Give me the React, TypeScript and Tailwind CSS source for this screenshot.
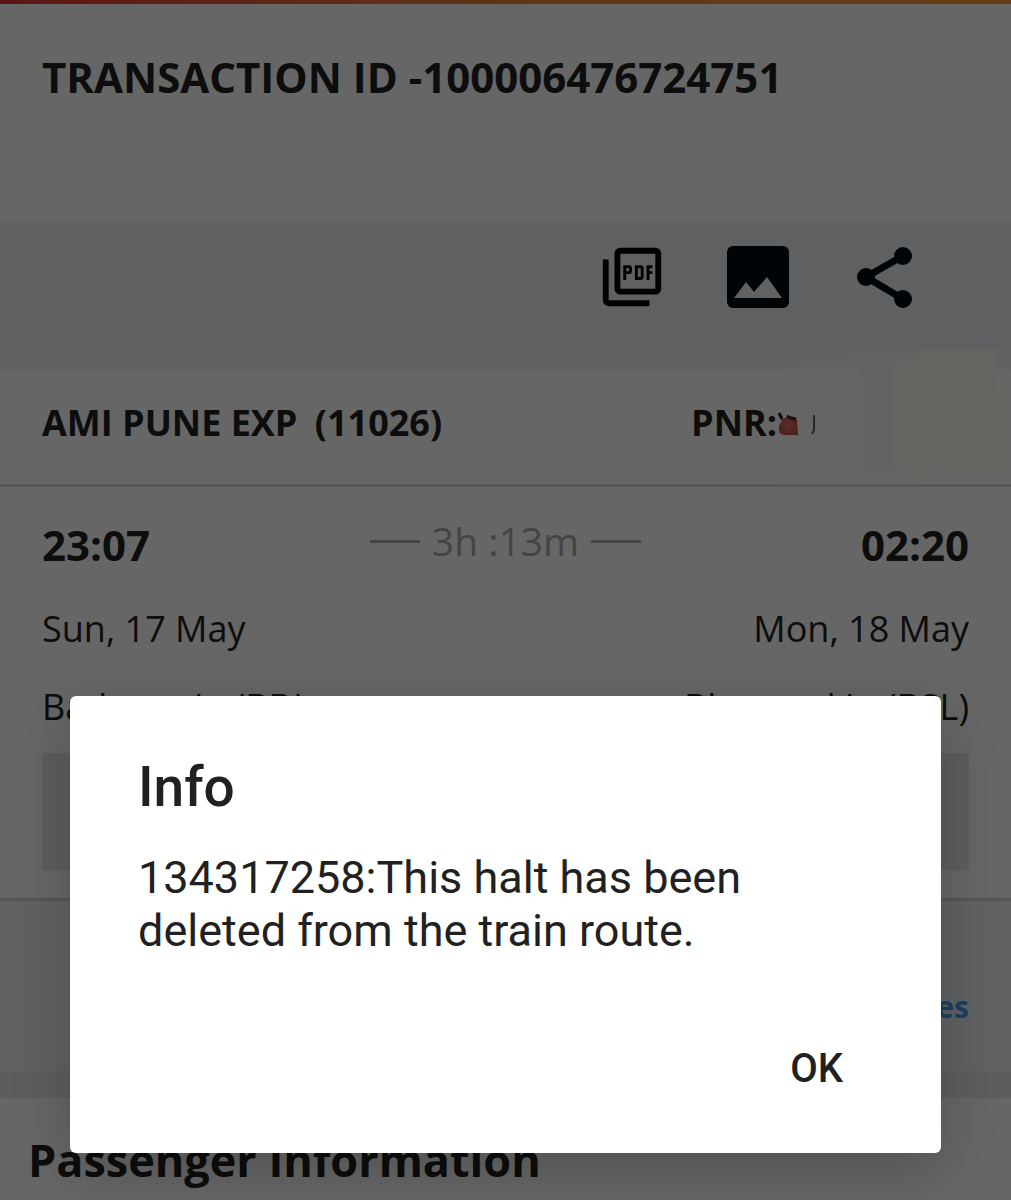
import { useState } from 'react';
import { MdOutlinePictureAsPdf } from 'react-icons/md';

interface Stop {
  time: string;
  date: string;
  station: string;
}

const departure: Stop = { time: '23:07', date: 'Sun, 17 May', station: 'Badnera Jn (BD)' };
const arrival: Stop = { time: '02:20', date: 'Mon, 18 May', station: 'Bhusaval Jn (BSL)' };

function ImageIcon() {
  return (
    <svg width="62" height="62" viewBox="0 0 62 62" aria-hidden="true">
      <rect width="62" height="62" rx="6" fill="#000a10" />
      <path d="M7 52 19 36l8 10 13-15 15 21z" fill="#f4f4f4" />
    </svg>
  );
}

function ShareIcon() {
  return (
    <svg width="58" height="62" viewBox="0 0 58 62" aria-hidden="true">
      <path d="M48 10 11 31l37 22" fill="none" stroke="#000a10" strokeWidth="7" />
      <circle cx="48" cy="10" r="9" fill="#000a10" />
      <circle cx="11" cy="31" r="9" fill="#000a10" />
      <circle cx="48" cy="53" r="9" fill="#000a10" />
    </svg>
  );
}

// Smudge painted over the booking number
function RedactedPnr() {
  return (
    <svg className="absolute -top-5 right-0" width="236" height="140" viewBox="0 0 236 140" aria-hidden="true">
      <defs>
        <linearGradient id="smudge" x1="0" y1="0" x2="1" y2="0">
          <stop offset="0" stopColor="#fffaf5" stopOpacity="0.3" />
          <stop offset="0.4" stopColor="#fbf8f5" />
          <stop offset="1" stopColor="#fbfbef" />
        </linearGradient>
        <radialGradient id="berry" cx="0.5" cy="0.6" r="0.6">
          <stop offset="0" stopColor="#e07468" />
          <stop offset="1" stopColor="#b84a42" />
        </radialGradient>
        <filter id="soft" x="-10%" y="-10%" width="120%" height="120%">
          <feGaussianBlur stdDeviation="4" />
        </filter>
        <filter id="edge" x="-20%" y="-20%" width="140%" height="140%">
          <feGaussianBlur stdDeviation="0.7" />
        </filter>
      </defs>
      <path d="M10 8 224 -4l4 122-100 10-120 4z" fill="url(#smudge)" filter="url(#soft)" />
      <g filter="url(#edge)">
        <path d="M4 64l4 6 6-3 8 4 1 15H9q-6-1-5-8 1-4 3-6z" fill="url(#berry)" />
        <path d="M4 64l3 6m5-3 4 2 5 1" fill="none" stroke="#4a1a18" strokeWidth="3" />
        <path d="M39 66v15l-2 4" fill="none" stroke="#666" strokeWidth="2" />
      </g>
    </svg>
  );
}

export default function App() {
  const [open, setOpen] = useState(true);

  return (
    <div className="relative min-h-screen overflow-hidden bg-white font-['Open_Sans',sans-serif] text-[#222]">
      <div className="h-1 bg-linear-to-r from-[#e8303a] via-[#f09030] via-60% to-[#f59a35]" />

      <header className="h-[217px] px-[42px] pt-11">
        <h1 className="text-[42px] leading-[58px] font-bold">TRANSACTION ID -100006476724751</h1>
      </header>

      <div className="flex h-[148px] items-start justify-end gap-[66px] bg-[#edf0f5] pt-[25px] pr-[98px]">
        <button
          type="button"
          aria-label="Download PDF"
          className="flex h-[62px] w-[58px] items-center justify-center text-black"
        >
          <MdOutlinePictureAsPdf size={70} className="shrink-0" />
        </button>
        <button type="button" aria-label="Save as image">
          <ImageIcon />
        </button>
        <button type="button" aria-label="Share">
          <ShareIcon />
        </button>
      </div>

      <section>
        <div className="relative flex h-[118px] justify-between border-b-3 border-[#d8d8d8] px-[42px] pt-[30px] text-[36px] leading-[48px] font-bold">
          <h2>
            AMI PUNE EXP <span className="ml-2">(11026)</span>
          </h2>
          <p className="mr-[192px]">PNR:</p>
          <RedactedPnr />
        </div>

        <div className="px-[42px] pt-[25px]">
          <div className="flex items-center justify-between text-[42px] leading-[58px] font-bold">
            <span>{departure.time}</span>
            <span className="flex items-center gap-3 pb-2 text-[39px] font-normal text-[#aaa]">
              <span className="h-[3px] w-[50px] bg-[#aaa]" />
              3h :13m
              <span className="h-[3px] w-[50px] bg-[#aaa]" />
            </span>
            <span>{arrival.time}</span>
          </div>
          <div className="mt-[27px] flex justify-between text-[36px] leading-[48px]">
            <span>{departure.date}</span>
            <span>{arrival.date}</span>
          </div>
          <div className="mt-[30px] flex justify-between text-[36px] leading-[48px]">
            <span>{departure.station}</span>
            <span>{arrival.station}</span>
          </div>
          <div className="mt-[22px] h-[117px] bg-[#e8e8ee]" />
        </div>
      </section>

      <div className="mt-7 flex h-[173px] items-start justify-end border-t-3 border-[#d8d8d8] bg-[#edf2f5] px-[42px] pt-[86px]">
        <a href="#services" className="text-[30px] leading-[40px] font-bold text-[#449dee]">
          Services
        </a>
      </div>
      <div className="h-[27px] bg-[#e8e8ee]" />

      <h2 className="px-7 pt-8 pb-2 text-[45px] leading-[60px] font-bold">Passenger Information</h2>

      {open && (
        <div className="absolute inset-0 flex items-end bg-black/60 px-[70px] pb-[47px]">
          <div
            role="dialog"
            aria-modal="true"
            aria-labelledby="info-title"
            className="w-full rounded-md bg-white px-[68px] pt-[59px] pb-[54px] font-[Roboto,sans-serif] text-[#212121] shadow-[0_16px_60px_rgba(0,0,0,0.2)]"
          >
            <h2 id="info-title" className="text-[55px] leading-[64px] font-medium">
              Info
            </h2>
            <p className="mt-8 max-w-[640px] text-[45px] leading-[53px]">
              134317258:This halt has been deleted from the train route.
            </p>
            <div className="mt-[82px] flex justify-end pr-[30px]">
              <button type="button" onClick={() => setOpen(false)} className="text-[40px] leading-[60px] font-medium">
                OK
              </button>
            </div>
          </div>
        </div>
      )}
    </div>
  );
}
